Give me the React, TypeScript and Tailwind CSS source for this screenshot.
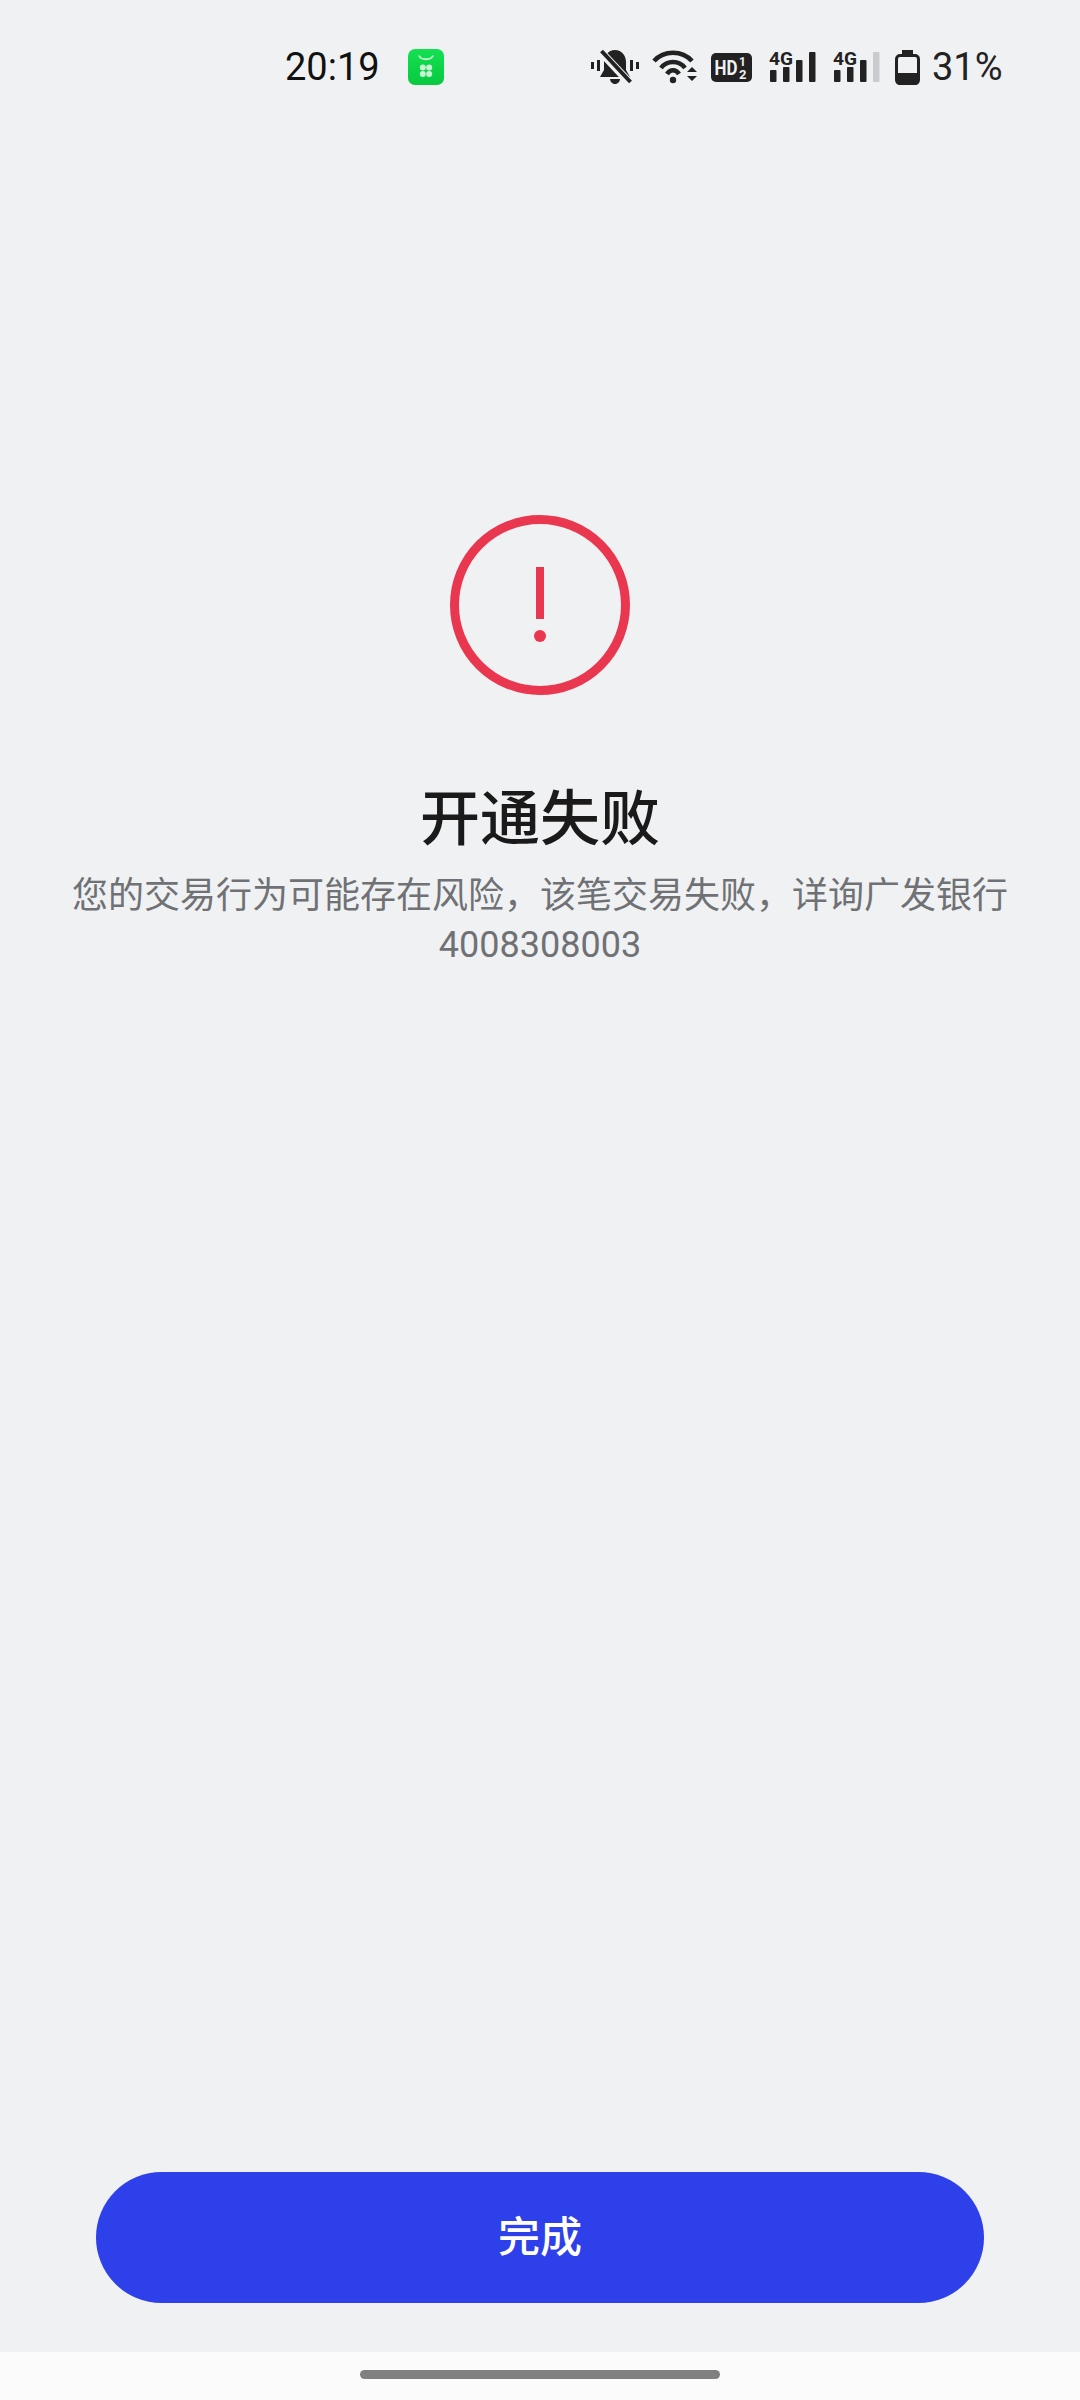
import React from 'react';

const FONT = "font-['Roboto','Noto_Sans_CJK_SC',sans-serif]";

const MarketIcon = () => (
  <svg width="36" height="36" viewBox="0 0 36 36" className="ml-[30px]">
    <defs>
      <linearGradient id="market" x1="0" y1="0" x2="0" y2="1">
        <stop offset="0" stopColor="#14e052" />
        <stop offset="1" stopColor="#08c93f" />
      </linearGradient>
    </defs>
    <rect width="36" height="36" rx="7" fill="url(#market)" />
    <path d="M11 6.500 C13 11.500 23 11.500 25 6.500" fill="none" stroke="#c8f5d3" strokeWidth="1.800" />
    <circle cx="14.800" cy="18.500" r="3" fill="#c8f5d3" />
    <circle cx="21.200" cy="18.500" r="3" fill="#c8f5d3" />
    <circle cx="14.800" cy="25" r="3" fill="#c8f5d3" />
    <circle cx="21.200" cy="25" r="3" fill="#c8f5d3" />
  </svg>
);

const BellOff = () => (
  <svg width="50" height="36" viewBox="0 0 50 36">
    <path d="M25 1 C32 1 36 7 36 13 L36 21 L40 28 L10 28 L14 21 L14 13 C14 7 18 1 25 1 Z" fill="#222" />
    <path d="M20 30 L30 30 C30 33 27 35 25 35 C23 35 20 33 20 30 Z" fill="#222" />
    <path d="M10 2 L39 33" stroke="#f0f1f3" strokeWidth="8" />
    <path d="M11.500 2 L40.500 33" stroke="#222" strokeWidth="4" />
    <rect x="1" y="13" width="3" height="7" fill="#222" />
    <rect x="7" y="11" width="3" height="11" fill="#222" />
    <rect x="40" y="11" width="3" height="11" fill="#222" />
    <rect x="46" y="13" width="3" height="7" fill="#222" />
  </svg>
);

const Wifi = () => (
  <svg width="46" height="36" viewBox="0 0 46 36">
    <path d="M2 12 C12 1 30 1 40 12" fill="none" stroke="#222" strokeWidth="4.500" />
    <path d="M9 19 C15 11 27 11 33 19" fill="none" stroke="#222" strokeWidth="4.500" />
    <path d="M15 25 C18 20 24 20 27 25" fill="none" stroke="#222" strokeWidth="4.500" />
    <circle cx="21" cy="31" r="3.200" fill="#222" />
    <path d="M35 23 L40 18 L45 23 Z" fill="#222" />
    <path d="M35 27 L45 27 L40 32 Z" fill="#222" />
  </svg>
);

const HdBadge = () => (
  <svg width="41" height="29" viewBox="0 0 41 29" className="ml-[13px]">
    <rect width="41" height="29" rx="5" fill="#222" />
    <text x="3.500" y="22" fontSize="20" fontWeight="700" fill="#f0f1f3" fontFamily="Roboto" textLength="23" lengthAdjust="spacingAndGlyphs">HD</text>
    <text x="28" y="12.500" fontSize="12" fontWeight="700" fill="#f0f1f3" fontFamily="Roboto">1</text>
    <text x="28" y="26" fontSize="13" fontWeight="700" fill="#f0f1f3" fontFamily="Roboto">2</text>
  </svg>
);

const Signal = ({ last }: { last: string }) => (
  <svg width="47" height="42" viewBox="0 -4 47 42">
    <text x="0" y="15" fontSize="18" fontWeight="700" fill="#222" fontFamily="Roboto" textLength="24" lengthAdjust="spacingAndGlyphs">4G</text>
    <rect x="1" y="20" width="6.500" height="12" rx="1" fill="#222" />
    <rect x="14" y="17" width="6.500" height="15" rx="1" fill="#222" />
    <rect x="27" y="10" width="6.500" height="22" rx="1" fill="#222" />
    <rect x="40" y="2" width="6.500" height="30" rx="1" fill={last} />
  </svg>
);

const Battery = () => (
  <svg width="25" height="35" viewBox="0 0 25 35">
    <path d="M7 0 H18 V4 H7 Z" fill="#222" />
    <rect x="1.500" y="5.500" width="22" height="28" rx="3.500" fill="none" stroke="#222" strokeWidth="3" />
    <path d="M1 23 H24 V31 Q24 35 20 35 H5 Q1 35 1 31 Z" fill="#222" />
  </svg>
);

const StatusBar = () => (
  <div className="flex items-center h-[100px] pt-[34px] pl-[285px]">
    <span className="text-[38px] leading-none text-[#111] w-[93px] whitespace-nowrap">20:19</span>
    <MarketIcon />
    <div className="ml-[146px] flex items-center">
      <BellOff />
      <div className="ml-[12px]"><Wifi /></div>
      <HdBadge />
      <div className="ml-[17px]"><Signal last="#222" /></div>
      <div className="ml-[17px]"><Signal last="#c9cbce" /></div>
      <div className="ml-[15px]"><Battery /></div>
      <span className="ml-[12px] text-[38px] leading-none text-[#222] whitespace-nowrap">31%</span>
    </div>
  </div>
);

const FailIcon = () => (
  <svg width="180" height="180" viewBox="0 0 180 180">
    <circle cx="90" cy="90" r="85.500" fill="none" stroke="#e9374f" strokeWidth="9" />
    <rect x="86" y="52" width="8" height="52" fill="#e9374f" />
    <circle cx="90" cy="121" r="6" fill="#e9374f" />
  </svg>
);

export default function App() {
  return (
    <div className={`${FONT} w-[1080px] h-[2400px] bg-[#f0f1f3] flex flex-col`}>
      <StatusBar />
      <main className="flex-1 flex flex-col items-center pt-[415px]">
        <FailIcon />
        <h1 className="mt-[85px] text-[60px] leading-[80px] font-medium text-[#1a1a1a]">开通失败</h1>
        <p className="mt-[12px] w-[960px] text-center text-[36px] leading-[49px] text-[#6f7175]">
          您的交易行为可能存在风险，该笔交易失败，详询广发银行 4008308003
        </p>
      </main>
      <div className="px-[96px] pb-[49px]">
        <button className="w-full h-[131px] rounded-[66px] bg-[#2e40ea] text-white text-[42px] font-medium">
          完成
        </button>
      </div>
      <div className="h-[48px] bg-[#fbfbfb] pt-[18px] flex justify-center">
        <div className="w-[360px] h-[9px] rounded-full bg-[#808080]" />
      </div>
    </div>
  );
}
